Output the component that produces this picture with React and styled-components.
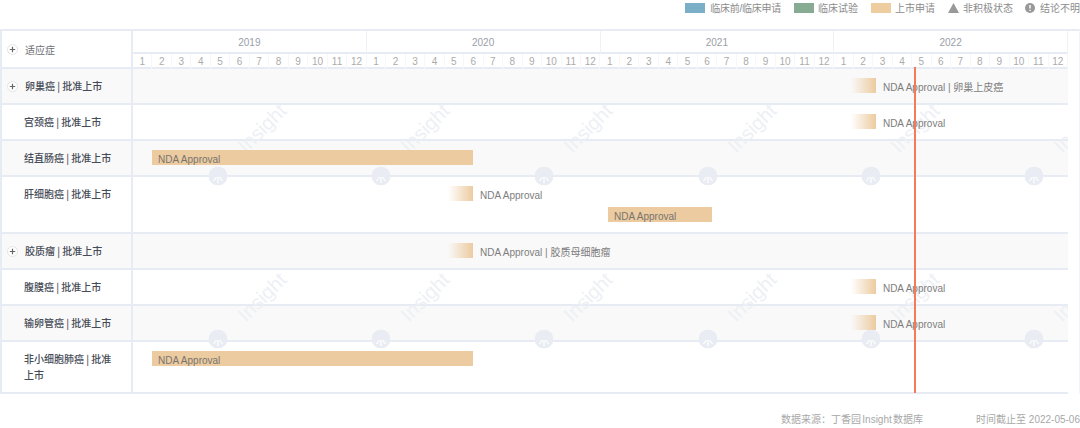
import React from 'react';
import styled, { createGlobalStyle } from 'styled-components';

const MONTH = 19.5;
const LABEL_FONT = '"Liberation Sans", "Noto Sans CJK SC", sans-serif';
const LINE = '#e7ecf4';

const GlobalStyle = createGlobalStyle`
  html, body {
    margin: 0;
    background: #fff;
    overflow: hidden;
  }
  body {
    font-family: ${LABEL_FONT};
  }
`;

const Page = styled.div`
  width: 1080px;
  height: 428px;
  overflow: hidden;
`;

const Legend = styled.div`
  height: 29px;
  box-sizing: border-box;
  padding-top: 3px;
  display: flex;
  justify-content: flex-end;
  font-size: 10px;
  line-height: 11px;
  color: #8c8c8c;
`;

const LegendItem = styled.div`
  display: flex;
  align-items: flex-start;
  gap: ${props => props.$gap || 4}px;
  margin-left: ${props => props.$space || 13}px;
  white-space: nowrap;
`;

const LegendWideText = styled.span`
  letter-spacing: -0.25px;
`;

const Swatch = styled.span`
  width: 20px;
  height: 10px;
  background: ${props => props.$color};
`;

const Table = styled.div`
  position: relative;
  border-top: 2px solid ${LINE};
  border-left: 2px solid ${LINE};
  border-right: 1px solid #f0f3f8;
`;

const Row = styled.div`
  position: relative;
  display: flex;
  width: 1066px;
  height: ${props => props.$height}px;
  box-sizing: border-box;
  border-bottom: 2px solid ${LINE};
  background: ${props => (props.$shaded ? '#f9f9f9' : '#fff')};
`;

const HeaderRow = styled(Row)`
  height: 38px;
  background: #fff;
`;

const LabelCell = styled.div`
  flex: 0 0 131px;
  box-sizing: border-box;
  display: flex;
  align-items: ${props => (props.$center ? 'center' : 'flex-start')};
  padding: ${props => (props.$center ? '1px 14px 0 5px' : '9px 14px 0 5px')};
  border-right: 2px solid ${LINE};
  font-size: 10px;
  line-height: 16px;
  font-weight: ${props => (props.$center ? 400 : 500)};
  color: ${props => (props.$center ? '#6d6f74' : '#464c57')};
  font-family: "Noto Sans CJK SC", sans-serif;
`;

const PlusSlot = styled.span`
  flex: 0 0 10px;
  height: 16px;
  margin-right: 7px;
  display: flex;
  align-items: center;
  justify-content: center;
`;

const Scale = styled.div`
  flex: 1;
  display: flex;
  flex-direction: column;
`;

const Years = styled.div`
  height: 21px;
  display: grid;
  grid-template-columns: repeat(4, 1fr);
  border-bottom: 2px solid ${LINE};
`;

const Year = styled.div`
  font-size: 10px;
  line-height: 23px;
  text-align: center;
  color: #9a9ea8;
  border-right: 1px solid #eef1f6;
`;

const Months = styled.div`
  flex: 1;
  display: grid;
  grid-template-columns: repeat(48, 1fr);
`;

const Month = styled.div`
  font-size: 10px;
  line-height: 15px;
  text-align: center;
  color: #ababab;
  border-right: 1px solid #f6f7fa;
`;

const Track = styled.div`
  flex: 1;
  box-sizing: border-box;
  padding-top: 9px;
  display: flex;
  flex-direction: column;
  gap: 6px;
`;

const BarLine = styled.div`
  position: relative;
  z-index: 2;
  display: flex;
  align-items: flex-start;
  height: 15px;
  font-size: 10px;
  line-height: 19px;
  white-space: nowrap;
  color: #7d7d7d;
`;

const Bar = styled.div`
  height: 15px;
  box-sizing: border-box;
  padding-left: 6px;
  background: #eccba0;
  color: #77746f;
`;

const FadeBar = styled.div`
  height: 15px;
  background: linear-gradient(to right, rgba(236, 203, 160, 0), #eccba0);
  margin-right: 7px;
`;

const Watermarks = styled.div`
  position: absolute;
  left: 131px;
  top: 38px;
  width: 935px;
  height: 325px;
  overflow: hidden;
  pointer-events: none;
  z-index: 1;
`;

const WatermarkText = styled.span`
  position: absolute;
  font-size: 20px;
  line-height: 20px;
  color: #edf0f5;
  transform: translate(-50%, -50%) rotate(-45deg);
`;

const WatermarkLogo = styled.svg`
  position: absolute;
  width: 19px;
  height: 19px;
  transform: translate(-50%, -50%);
`;

const TodayLine = styled.div`
  position: absolute;
  left: 912px;
  top: 36px;
  width: 2px;
  height: 326px;
  background: #f47b57;
  z-index: 3;
`;

const Footer = styled.div`
  display: flex;
  justify-content: flex-end;
  gap: 53px;
  padding-top: 19px;
  font-size: 10px;
  line-height: 14px;
  color: #a8a8a8;
  white-space: nowrap;
`;

const SourceNote = styled.span`
  word-spacing: -1.5px;
`;

function Plus() {
  return (
    <svg width="11" height="11" viewBox="0 0 11 11">
      <circle cx="5.5" cy="5.5" r="5" fill="#fff" stroke="#e4e4e4" />
      <path d="M2.8 5.5h5.4M5.5 2.8v5.4" stroke="#666" strokeWidth="1.2" />
    </svg>
  );
}

function Logo({ style }) {
  return (
    <WatermarkLogo viewBox="0 0 19 19" style={style}>
      <circle cx="9.5" cy="9.5" r="9.5" fill="#e9edf3" />
      <path
        d="M9.5 10.5v6M8 10.5l-3 4M11 10.5l3 4"
        stroke="#fff"
        strokeWidth="1.2"
        fill="none"
      />
    </WatermarkLogo>
  );
}

const YEARS = [2019, 2020, 2021, 2022];
const MONTHS = Array.from({ length: 12 }, (_, i) => i + 1);

const ROWS = [
  { label: '卵巢癌 | 批准上市', plus: true, height: 36, lines: [{ from: 36.87, to: 38.15, fade: true, note: 'NDA Approval | 卵巢上皮癌' }] },
  { label: '宫颈癌 | 批准上市', height: 36, lines: [{ from: 36.87, to: 38.15, fade: true, note: 'NDA Approval' }] },
  { label: '结直肠癌 | 批准上市', height: 36, lines: [{ from: 1.03, to: 17.49, text: 'NDA Approval' }] },
  {
    label: '肝细胞癌 | 批准上市',
    height: 57,
    lines: [
      { from: 16.2, to: 17.49, fade: true, note: 'NDA Approval' },
      { from: 24.41, to: 29.74, text: 'NDA Approval' },
    ],
  },
  { label: '胶质瘤 | 批准上市', plus: true, height: 36, lines: [{ from: 16.2, to: 17.49, fade: true, note: 'NDA Approval | 胶质母细胞瘤' }] },
  { label: '腹膜癌 | 批准上市', height: 36, lines: [{ from: 36.87, to: 38.15, fade: true, note: 'NDA Approval' }] },
  { label: '输卵管癌 | 批准上市', height: 36, lines: [{ from: 36.87, to: 38.15, fade: true, note: 'NDA Approval' }] },
  { label: '非小细胞肺癌 | 批准上市', height: 52, lines: [{ from: 1.03, to: 17.49, text: 'NDA Approval' }] },
];

// page coordinates of the tiled watermark, shifted into the chart area
const TEXT_ROWS = [128, 297];
const LOGO_ROWS = [176, 339];
const TILES = [0, 1, 2, 3, 4, 5];

function TimelineBar({ from, to, fade, note, text }) {
  const width = (to - from) * MONTH;
  const offset = { marginLeft: from * MONTH - 1 };
  return (
    <BarLine>
      {fade ? (
        <>
          <FadeBar style={{ ...offset, width }} />
          <span>{note}</span>
        </>
      ) : (
        <Bar style={{ ...offset, width }}>{text}</Bar>
      )}
    </BarLine>
  );
}

export default function App() {
  return (
    <Page>
      <GlobalStyle />
      <Legend>
        <LegendItem $gap={5}><Swatch $color="#7bafc8" /><LegendWideText>临床前/临床申请</LegendWideText></LegendItem>
        <LegendItem><Swatch $color="#87ab93" /><span>临床试验</span></LegendItem>
        <LegendItem><Swatch $color="#eecda1" /><span>上市申请</span></LegendItem>
        <LegendItem>
          <svg width="11" height="10" viewBox="0 0 11 10">
            <path d="M5.5 0L11 10H0z" fill="#999" />
          </svg>
          <span>非积极状态</span>
        </LegendItem>
        <LegendItem $gap={5} $space={12}>
          <svg width="10" height="10" viewBox="0 0 10 10">
            <circle cx="5" cy="5" r="5" fill="#999" />
            <path d="M5 2v3.6M5 6.8v1.3" stroke="#fff" strokeWidth="1.4" />
          </svg>
          <span>结论不明</span>
        </LegendItem>
      </Legend>

      <Table>
        <HeaderRow>
          <LabelCell $center>
            <PlusSlot><Plus /></PlusSlot>
            适应症
          </LabelCell>
          <Scale>
            <Years>
              {YEARS.map(y => <Year key={y}>{y}</Year>)}
            </Years>
            <Months>
              {YEARS.flatMap(y => MONTHS.map(m => <Month key={`${y}-${m}`}>{m}</Month>))}
            </Months>
          </Scale>
        </HeaderRow>

        {ROWS.map((row, i) => (
          <Row key={row.label} $height={row.height} $shaded={i % 2 === 0}>
            <LabelCell>
              <PlusSlot>{row.plus && <Plus />}</PlusSlot>
              <span>{row.label}</span>
            </LabelCell>
            <Track>
              {row.lines.map(line => <TimelineBar key={line.from} {...line} />)}
            </Track>
          </Row>
        ))}

        <Watermarks>
          {TEXT_ROWS.map(y =>
            TILES.map(t => (
              <WatermarkText key={`t${y}-${t}`} style={{ left: 262 + t * 163.2 - 133, top: y - 69 }}>
                Insight
              </WatermarkText>
            ))
          )}
          {LOGO_ROWS.map(y =>
            TILES.map(t => (
              <Logo key={`l${y}-${t}`} style={{ left: 218 + t * 163.2 - 133, top: y - 69 }} />
            ))
          )}
        </Watermarks>

        <TodayLine />
      </Table>

      <Footer>
        <SourceNote>数据来源：丁香园 Insight 数据库</SourceNote>
        <span>时间截止至 2022-05-06</span>
      </Footer>
    </Page>
  );
}
